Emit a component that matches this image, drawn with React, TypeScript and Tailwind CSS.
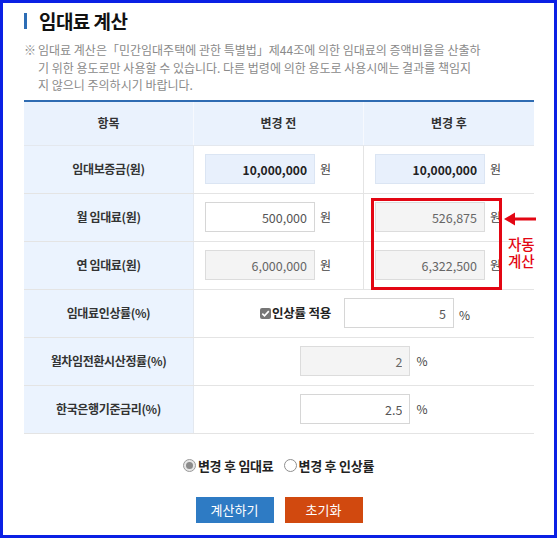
import React from 'react';

const FONT = "font-['Noto_Sans_CJK_KR','Noto_Sans',sans-serif]";

interface FieldProps {
  value: string;
  tone?: 'blue' | 'white' | 'gray';
  bold?: boolean;
}

const Field: React.FC<FieldProps> = ({ value, tone = 'white', bold = false }) => {
  const bg =
    tone === 'blue'
      ? 'bg-[#e8f0fc] border-[#dbe5f3]'
      : tone === 'gray'
      ? 'bg-[#f4f4f4] border-[#dcdcdc] text-[#666]'
      : 'bg-white border-[#d6d6d6] text-[#555]';
  return (
    <input
      readOnly
      value={value}
      className={`w-[110px] h-[30px] border ${bg} text-right pr-[7px] outline-none ${
        bold ? 'font-bold text-[#222] text-[12px]' : 'text-[12.5px]'
      }`}
    />
  );
};

const Unit: React.FC<{ children: React.ReactNode }> = ({ children }) => (
  <span className="text-[12px] text-[#444]">{children}</span>
);

const Label: React.FC<{ children: React.ReactNode }> = ({ children }) => (
  <div className="w-[170px] h-full flex items-center justify-center bg-[#ebf3fe] border-r border-[#e3e8ef] text-[12px] font-bold text-[#333] tracking-[-0.03em]">
    {children}
  </div>
);

const Row: React.FC<{ children: React.ReactNode }> = ({ children }) => (
  <div className="flex h-[48px] border-b border-[#e4e4e4]">{children}</div>
);

const Radio: React.FC<{ checked?: boolean; label: string }> = ({ checked, label }) => (
  <label className="flex items-center gap-[2px]">
    <span
      className={`w-[13px] h-[13px] rounded-full border flex items-center justify-center ${
        checked ? 'border-[#9a9a9a] bg-[#e6e6e6]' : 'border-[#8f8f8f] bg-white'
      }`}
    >
      {checked && <span className="w-[7px] h-[7px] rounded-full bg-[#8a8a8a]" />}
    </span>
    <span className="text-[13px] font-bold text-[#222] tracking-[-0.02em]">{label}</span>
  </label>
);

export default function App() {
  return (
    <div
      className={`${FONT} w-[557px] h-[538px] border-[3px] border-[#0b20e4] bg-white pl-[21px] pr-[19px] pt-[6px]`}
    >
      {/* title */}
      <div className="flex items-center gap-[12px] h-[24px]">
        <span className="w-[3px] h-[16px] bg-[#2d6db5]" />
        <h1 className="text-[19px] font-bold text-[#111] tracking-[-0.03em]">임대료 계산</h1>
      </div>

      {/* note */}
      <div className="flex mt-[8px] text-[12px] leading-[17.5px] text-[#8a8a8a]">
        <span className="w-[14px] shrink-0">※</span>
        <div className="whitespace-nowrap">
          <div>임대료 계산은「민간임대주택에 관한 특별법」제44조에 의한 임대료의 증액비율을 산출하</div>
          <div>기 위한 용도로만 사용할 수 있습니다. 다른 법령에 의한 용도로 사용시에는 결과를 책임지</div>
          <div>지 않으니 주의하시기 바랍니다.</div>
        </div>
      </div>

      {/* table */}
      <div className="relative w-[510px] mt-[6px] border-t-2 border-[#2f6cb2]">
        <div className="flex h-[44px] bg-[#eaf2fd] text-[12px] font-bold text-[#333] border-b border-[#e4e8ee]">
          <div className="w-[170px] flex items-center justify-center border-r border-[#f6f9fe]">항목</div>
          <div className="w-[170px] flex items-center justify-center border-r border-[#f6f9fe]">변경 전</div>
          <div className="w-[170px] flex items-center justify-center">변경 후</div>
        </div>

        <Row>
          <Label>임대보증금(원)</Label>
          <div className="w-[170px] flex items-center gap-[5px] pl-[11px] border-r border-[#e4e4e4]">
            <Field value="10,000,000" tone="blue" bold />
            <Unit>원</Unit>
          </div>
          <div className="w-[170px] flex items-center gap-[5px] pl-[11px]">
            <Field value="10,000,000" tone="blue" bold />
            <Unit>원</Unit>
          </div>
        </Row>

        <Row>
          <Label>월 임대료(원)</Label>
          <div className="w-[170px] flex items-center gap-[5px] pl-[11px] border-r border-[#e4e4e4]">
            <Field value="500,000" />
            <Unit>원</Unit>
          </div>
          <div className="w-[170px] flex items-center gap-[5px] pl-[11px]">
            <Field value="526,875" tone="gray" />
            <Unit>원</Unit>
          </div>
        </Row>

        <Row>
          <Label>연 임대료(원)</Label>
          <div className="w-[170px] flex items-center gap-[5px] pl-[11px] border-r border-[#e4e4e4]">
            <Field value="6,000,000" tone="gray" />
            <Unit>원</Unit>
          </div>
          <div className="w-[170px] flex items-center gap-[5px] pl-[11px]">
            <Field value="6,322,500" tone="gray" />
            <Unit>원</Unit>
          </div>
        </Row>

        <Row>
          <Label>임대료인상률(%)</Label>
          <div className="w-[340px] flex items-center justify-center pl-[2px]">
            <svg width="11" height="11" viewBox="0 0 11 11" className="mr-[1px]">
              <rect x="0" y="0" width="11" height="11" rx="2" fill="#767676" />
              <path d="M2.3 5.6 L4.5 7.8 L8.8 3.1" stroke="#fff" strokeWidth="1.6" fill="none" />
            </svg>
            <span className="text-[12.5px] font-bold text-[#222] tracking-[-0.02em] mr-[13px]">인상률 적용</span>
            <Field value="5" />
            <span className="ml-[5px]">
              <Unit>%</Unit>
            </span>
          </div>
        </Row>

        <Row>
          <Label>월차임전환시산정률(%)</Label>
          <div className="w-[340px] flex items-center justify-center gap-[6px]">
            <Field value="2" tone="gray" />
            <Unit>%</Unit>
          </div>
        </Row>

        <Row>
          <Label>한국은행기준금리(%)</Label>
          <div className="w-[340px] flex items-center justify-center gap-[6px]">
            <Field value="2.5" />
            <Unit>%</Unit>
          </div>
        </Row>

        {/* annotation */}
        <div className="absolute left-[347px] top-[96px] w-[131px] h-[92px] border-[3px] border-[#e30613] pointer-events-none" />
        <svg className="absolute left-[480px] top-[110px]" width="32" height="14" viewBox="0 0 32 14">
          <polygon points="0,7 11,0.5 11,13.5" fill="#e30613" />
          <rect x="9" y="5.5" width="23" height="3" fill="#e30613" />
        </svg>
        <div className="absolute left-[484px] top-[133px] text-[14.5px] text-[#e30613] font-medium whitespace-nowrap">
          <div className="h-[17px] leading-[17px]">자동</div>
          <div className="h-[17px] leading-[17px]">계산</div>
        </div>
      </div>

      {/* options */}
      <div className="flex items-center justify-center gap-[10px] h-[20px] mt-[22px] pr-[2px]">
        <Radio checked label="변경 후 임대료" />
        <Radio label="변경 후 인상률" />
      </div>

      {/* buttons */}
      <div className="flex justify-center gap-[11px] mt-[21px] pr-[1px]">
        <button className="w-[78px] h-[26px] bg-[#2e7bc4] text-white text-[13px]">계산하기</button>
        <button className="w-[78px] h-[26px] bg-[#d1490f] text-white text-[13px]">초기화</button>
      </div>
    </div>
  );
}
